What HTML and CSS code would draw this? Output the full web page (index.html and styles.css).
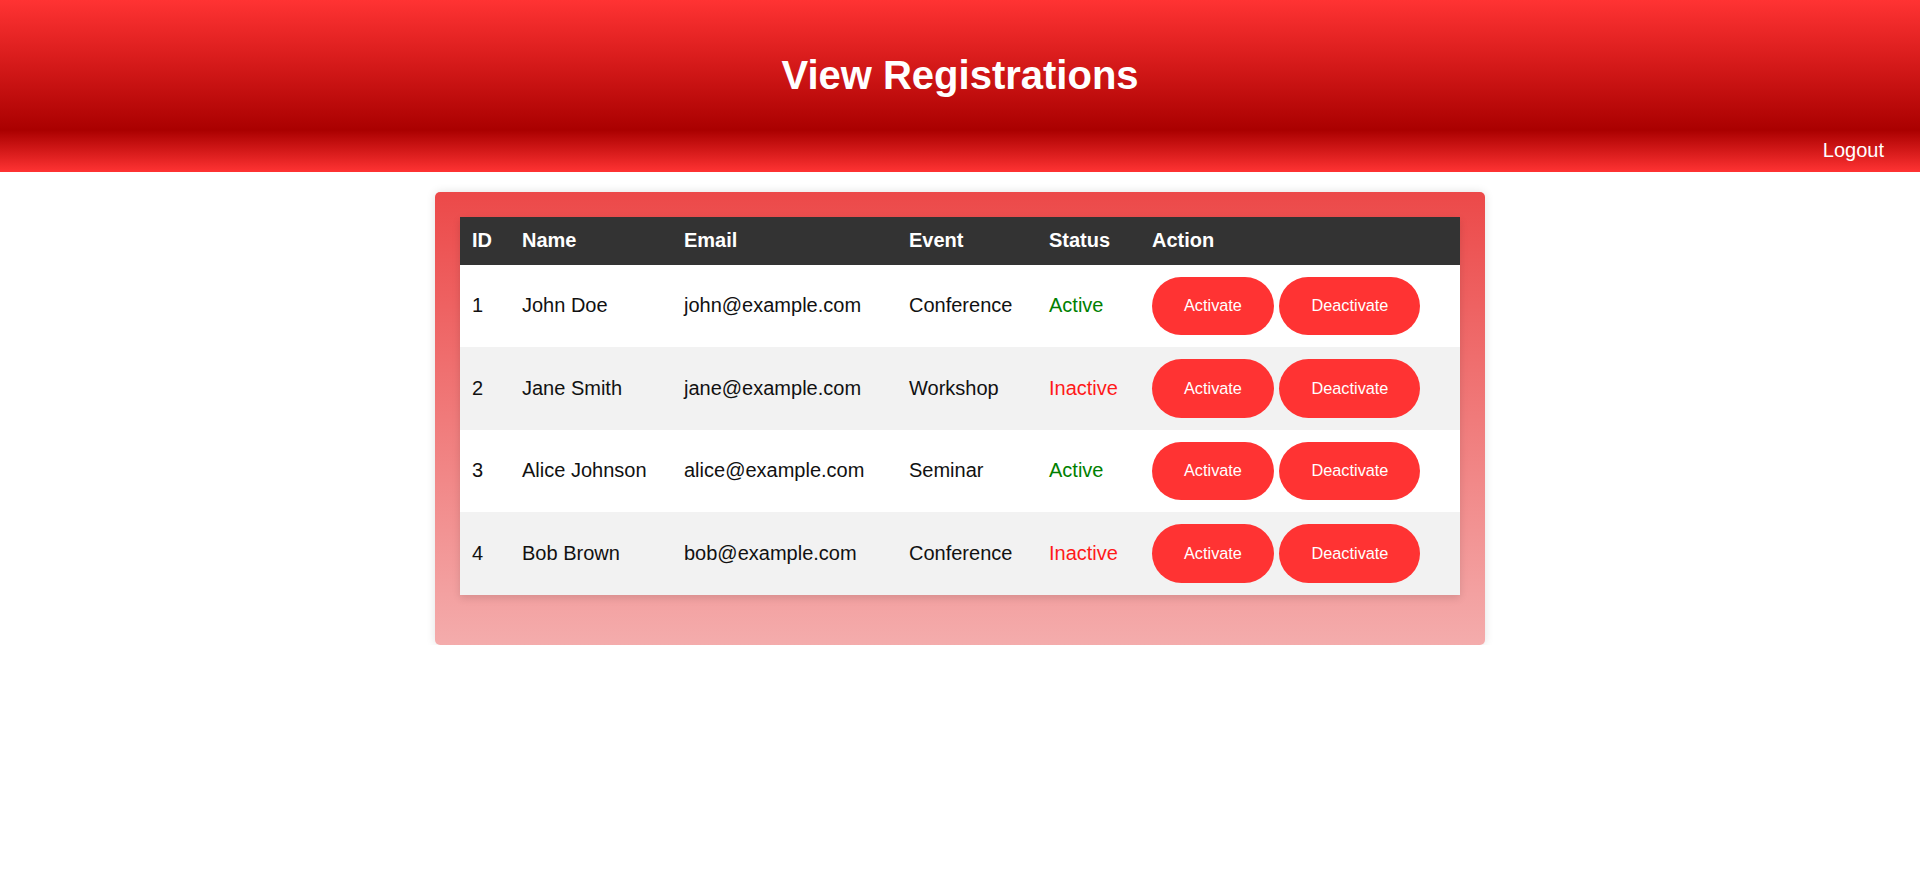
FILE: index.html
```html
<!DOCTYPE html>
<html lang="en">
<head>
<meta charset="utf-8">
<title>View Registrations</title>
<link rel="stylesheet" href="styles.css">
</head>
<body>
<header class="site-header">
  <div class="banner"><h1 class="title">View Registrations</h1></div>
  <nav class="topnav"><a class="logout" href="#">Logout</a></nav>
</header>
<main class="card">
  <table class="reg-table">
    <colgroup>
      <col class="c-id"><col class="c-name"><col class="c-email"><col class="c-event"><col class="c-status"><col class="c-action">
    </colgroup>
    <thead>
      <tr><th>ID</th><th>Name</th><th>Email</th><th>Event</th><th>Status</th><th>Action</th></tr>
    </thead>
    <tbody>
      <tr><td>1</td><td>John Doe</td><td>john@example.com</td><td>Conference</td><td class="active">Active</td><td><button class="btn">Activate</button> <button class="btn">Deactivate</button></td></tr>
      <tr><td>2</td><td>Jane Smith</td><td>jane@example.com</td><td>Workshop</td><td class="inactive">Inactive</td><td><button class="btn">Activate</button> <button class="btn">Deactivate</button></td></tr>
      <tr><td>3</td><td>Alice Johnson</td><td>alice@example.com</td><td>Seminar</td><td class="active">Active</td><td><button class="btn">Activate</button> <button class="btn">Deactivate</button></td></tr>
      <tr><td>4</td><td>Bob Brown</td><td>bob@example.com</td><td>Conference</td><td class="inactive">Inactive</td><td><button class="btn">Activate</button> <button class="btn">Deactivate</button></td></tr>
    </tbody>
  </table>
</main>
</body>
</html>
```
FILE: styles.css
```css
* { box-sizing: border-box; }
body {
  margin: 0;
  font-family: "Liberation Sans", Arial, sans-serif;
  background: #fff;
  color: #111;
}
.banner {
  height: 130px;
  padding-top: 52px;
  background: linear-gradient(to bottom, #ff3333, #aa0000);
}
.title {
  margin: 0;
  font-size: 40px;
  font-weight: bold;
  line-height: 46px;
  color: #fff;
  text-align: center;
}
.topnav {
  height: 42px;
  padding: 9px 36px 0 0;
  text-align: right;
  background: linear-gradient(to bottom, #aa0000, #ff3333);
}
.logout {
  color: #fff;
  font-size: 20px;
  line-height: 23px;
  text-decoration: none;
}
.card {
  display: block;
  width: 1050px;
  margin: 20px auto 0;
  padding: 25px 25px 50px;
  border-radius: 5px;
  background: linear-gradient(to bottom, #ec4949, #f4acac);
  box-shadow: 0 0 10px rgba(0, 0, 0, 0.12);
}
.reg-table {
  width: 1000px;
  table-layout: fixed;
  border-collapse: collapse;
  background: #fff;
  box-shadow: 0 3px 8px rgba(0, 0, 0, 0.12);
  font-size: 20px;
}
.c-id { width: 50px; }
.c-name { width: 162px; }
.c-email { width: 225px; }
.c-event { width: 140px; }
.c-status { width: 103px; }
.c-action { width: 320px; }
.reg-table th {
  background: #333;
  color: #fff;
  font-weight: bold;
  text-align: left;
  padding: 13px 12px;
  line-height: 21.7px;
}
.reg-table td {
  padding: 12px;
  text-align: left;
  vertical-align: middle;
  white-space: nowrap;
}
.reg-table tbody tr:nth-child(even) { background: #f2f2f2; }
.reg-table tbody tr:nth-child(odd) { background: #fff; }
.active { color: #008000; }
.inactive { color: #ff1a1a; }
.btn {
  display: inline-block;
  vertical-align: middle;
  height: 58.5px;
  padding: 0 32px;
  border: none;
  border-radius: 30px;
  background: #ff3333;
  color: #fff;
  font-family: "Liberation Sans", Arial, sans-serif;
  font-size: 16.3px;
  cursor: pointer;
}
```
